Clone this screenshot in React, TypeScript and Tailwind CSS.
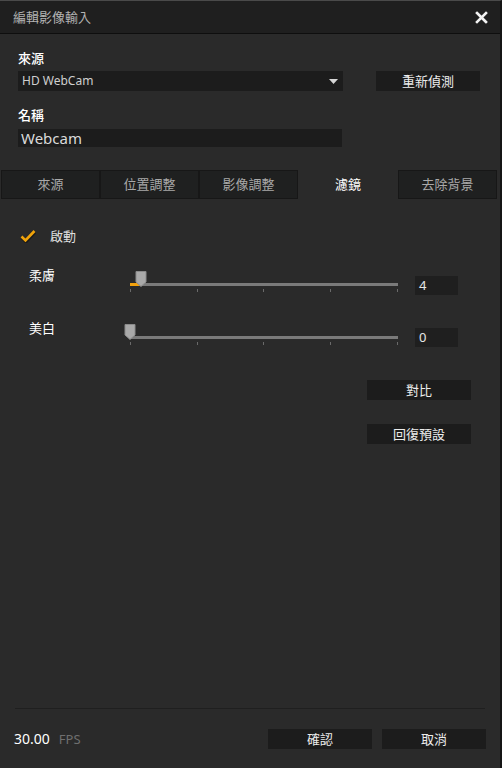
import React from "react";

const CJK = '"Segoe UI", "Noto Sans", "Noto Sans CJK TC", sans-serif';

function Slider({ value }: { value: number }) {
  const pos = (value / 100) * 268;
  return (
    <div className="relative w-[270px] h-[22px]">
      <div className="absolute left-0 top-[12px] h-[3px] w-[268px] bg-[#7a7a7a]" />
      {value > 0 && (
        <div
          className="absolute left-0 top-[12px] h-[3px] bg-[#f2a10d]"
          style={{ width: pos }}
        />
      )}
      {[0, 67, 133, 200, 267].map((x) => (
        <div
          key={x}
          className="absolute top-[18px] h-[3px] w-[1px] bg-[#6a6a6a]"
          style={{ left: x }}
        />
      ))}
      <svg
        className="absolute top-0"
        style={{ left: pos - 6 }}
        width="12"
        height="16"
        viewBox="0 0 12 16"
      >
        <path d="M1 0.5 H11 V11 L6 15.5 L1 11 Z" fill="#a9a9a9" stroke="#8a8a8a" strokeWidth="1" />
      </svg>
    </div>
  );
}

function Btn({ children, w = "w-[104px]" }: { children: React.ReactNode; w?: string }) {
  return (
    <div
      className={`${w} h-[20px] bg-[#1c1c1c] text-[13px] text-[#ececec] flex items-center justify-center leading-none`}
    >
      {children}
    </div>
  );
}

export default function App() {
  const tabs = ["來源", "位置調整", "影像調整", "濾鏡", "去除背景"];
  return (
    <div
      className="w-[502px] h-[768px] bg-[#2a2a2a] flex flex-col border-t border-[#4a4a4a] border-r-2 border-r-[#151515] overflow-hidden"
      style={{ fontFamily: CJK }}
    >
      <div className="h-[33px] shrink-0 bg-[#1f1f1f] border-b border-[#0e0e0e] flex items-center justify-between pl-[13px] pr-[12px]">
        <span className="text-[13px] text-[#b3b3b3] leading-none">編輯影像輸入</span>
        <svg width="13" height="13" viewBox="0 0 13 13" className="mt-[1px]">
          <path d="M2 2 L11 11 M11 2 L2 11" stroke="#f2f2f2" strokeWidth="2.6" strokeLinecap="square" />
        </svg>
      </div>

      <div className="pl-[18px] pt-[15px]">
        <div className="text-[13px] text-white leading-[18px] font-medium">來源</div>
        <div className="flex items-center mt-[4px]">
          <div className="w-[325px] h-[20px] bg-[#1c1c1c] flex items-center justify-between pl-[4px] pr-[5px]">
            <span className="text-[12px] text-[#cfcfcf] leading-none">HD WebCam</span>
            <svg width="9" height="5" viewBox="0 0 9 5">
              <path d="M0 0 H9 L4.5 5 Z" fill="#d6d6d6" />
            </svg>
          </div>
          <div className="ml-[33px]">
            <Btn w="w-[104px]">重新偵測</Btn>
          </div>
        </div>

        <div className="text-[13px] text-white leading-[18px] font-medium mt-[15px]">名稱</div>
        <div className="w-[324px] h-[18px] bg-[#1c1c1c] mt-[5px] flex items-center pl-[3px]">
          <span className="text-[15px] text-[#dadada] leading-none">Webcam</span>
        </div>
      </div>

      <div className="flex mt-[23px] h-[29px] pl-[1px]">
        {tabs.map((t, i) => {
          const active = i === 3;
          return (
            <div
              key={t}
              className={
                active
                  ? "w-[100px] h-[29px] flex items-center justify-center text-[13px] text-white bg-[#2a2a2a]"
                  : "w-[99px] h-[29px] flex items-center justify-center text-[13px] text-[#a9a9a9] bg-[#1f2020] border border-[#171717]"
              }
            >
              {t}
            </div>
          );
        })}
      </div>

      <div className="flex items-center pl-[20px] mt-[29px] h-[16px]">
        <svg width="16" height="14" viewBox="0 0 16 14">
          <path d="M1.5 7.5 L5.5 11.5 L14.5 2" stroke="#1a1a1a" strokeWidth="3.5" fill="none" transform="translate(0.5,1)" />
          <path d="M1.5 7.5 L5.5 11.5 L14.5 2" stroke="#f0a30a" strokeWidth="2.6" fill="none" />
        </svg>
        <span className="ml-[14px] text-[13px] text-[#dedede] leading-none">啟動</span>
      </div>

      <div className="flex items-start pl-[29px] mt-[22px]">
        <span className="w-[101px] text-[13px] text-white leading-[18px]">柔膚</span>
        <div className="mt-[5px]">
          <Slider value={4} />
        </div>
        <div className="ml-[15px] mt-[10px] w-[43px] h-[19px] bg-[#1f1f1f] flex items-center pl-[4px] text-[13px] text-[#e6e6e6] leading-none">
          4
        </div>
      </div>

      <div className="flex items-start pl-[29px] mt-[24px]">
        <span className="w-[101px] text-[13px] text-white leading-[18px]">美白</span>
        <div className="mt-[5px]">
          <Slider value={0} />
        </div>
        <div className="ml-[15px] mt-[9px] w-[43px] h-[19px] bg-[#1f1f1f] flex items-center pl-[4px] text-[13px] text-[#e6e6e6] leading-none">
          0
        </div>
      </div>

      <div className="flex flex-col items-end pr-[29px] mt-[33px] gap-[24px]">
        <Btn>對比</Btn>
        <Btn>回復預設</Btn>
      </div>

      <div className="flex-1" />

      <div className="mx-[15px] border-t border-[#1f1f1f]" />
      <div className="flex items-center h-[20px] mt-[20px] mb-[19px] pl-[14px] pr-[14px]">
        <span className="text-[14px] text-white leading-none">30.00</span>
        <span className="ml-[9px] text-[13px] text-[#6f6f6f] leading-none">FPS</span>
        <div className="flex-1" />
        <Btn>確認</Btn>
        <div className="w-[10px]" />
        <Btn>取消</Btn>
      </div>
    </div>
  );
}
